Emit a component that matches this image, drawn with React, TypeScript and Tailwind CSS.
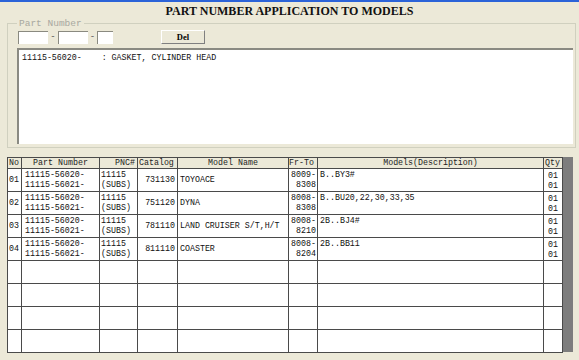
import React from "react";

const rows = [
  { no: "01", pnc: "11115", cat: "731130", model: "TOYOACE", fr: "8009-", to: "8308", desc: "B..BY3#" },
  { no: "02", pnc: "11115", cat: "751120", model: "DYNA", fr: "8008-", to: "8308", desc: "B..BU20,22,30,33,35" },
  { no: "03", pnc: "11115", cat: "781110", model: "LAND CRUISER S/T,H/T", fr: "8008-", to: "8210", desc: "2B..BJ4#" },
  { no: "04", pnc: "11115", cat: "811110", model: "COASTER", fr: "8008-", to: "8204", desc: "2B..BB11" },
];

const cell = "border border-[#4a4a4a] bg-white p-0";
const hcell = "border border-[#4a4a4a] bg-[#ECE9D8] p-0 font-normal text-[#222]";

export default function App() {
  return (
    <div
      className="w-[579px] h-[360px] bg-[#ECE9D8] overflow-hidden flex flex-col text-black"
      style={{ fontFamily: '"Liberation Mono", monospace' }}
    >
      <div className="h-[2px] bg-[#2B63D8]" />
      <div
        className="h-[21px] flex items-start pt-[2px] justify-center font-bold text-[12px] leading-[14px] text-[#111]"
        style={{ fontFamily: '"Liberation Serif", serif' }}
      >
        PART NUMBER APPLICATION TO MODELS
      </div>
      <div className="relative ml-[7px] w-[569px] h-[125px] border border-[#D0D0BF] flex flex-col">
        <div className="absolute -top-[6px] left-[9px] px-[2px] bg-[#ECE9D8] text-[9.5px] leading-[12px] text-[#A8A8A0]">
          Part Number
        </div>
        <div className="flex items-center mt-[6px] ml-[10px] h-[14px]">
          <div className="w-[30px] h-[13px] bg-white border-t border-l border-[#8a8a80]" />
          <div className="w-[10px] text-center text-[9px] leading-[13px] text-[#555]">-</div>
          <div className="w-[30px] h-[13px] bg-white border-t border-l border-[#8a8a80]" />
          <div className="w-[9px] text-center text-[9px] leading-[13px] text-[#555]">-</div>
          <div className="w-[16px] h-[13px] bg-white border-t border-l border-[#8a8a80]" />
          <div
            className="ml-[48px] w-[44px] h-[14px] flex items-center justify-center text-[8.5px] font-bold bg-[#ECE9D8] border-t border-l border-white border-r border-b border-r-[#808080] border-b-[#808080]"
            style={{ fontFamily: '"Liberation Serif", serif' }}
          >
            Del
          </div>
        </div>
        <div className="ml-[9px] mt-[4px] w-[556px] h-[96px] bg-white border-t-2 border-l-2 border-t-[#8a8a82] border-l-[#8a8a82] px-[3px] pt-[3px] text-[8.3px] leading-[10px] whitespace-pre text-[#111]">
          {"11115-56020-    : GASKET, CYLINDER HEAD"}
        </div>
      </div>
      <div className="mt-[9px] ml-[7px] flex">
        <table className="border-collapse table-fixed w-[555px] text-[8.3px] leading-[10px] text-[#111]">
          <colgroup>
            <col className="w-[14px]" />
            <col className="w-[78px]" />
            <col className="w-[38px]" />
            <col className="w-[40px]" />
            <col className="w-[111px]" />
            <col className="w-[29px]" />
            <col className="w-[226px]" />
            <col className="w-[19px]" />
          </colgroup>
          <thead>
            <tr className="h-[11px]">
              <th className={hcell + " text-left pl-[1px]"}>No</th>
              <th className={hcell + " text-center"}>Part Number</th>
              <th className={hcell + " text-right pr-[2px]"}>PNC#</th>
              <th className={hcell + " text-left pl-[1px]"}>Catalog</th>
              <th className={hcell + " text-center"}>Model Name</th>
              <th className={hcell + " text-left"}>Fr-To</th>
              <th className={hcell + " text-center"}>Models(Description)</th>
              <th className={hcell + " text-left pl-[1px]"}>Qty</th>
            </tr>
          </thead>
          <tbody>
            {rows.map((r) => (
              <tr key={r.no} className="h-[23px]">
                <td className={cell + " align-middle pl-[1px]"}>{r.no}</td>
                <td className={cell + " align-top pl-[3px] pt-[1px]"}>
                  <div>11115-56020-</div>
                  <div>11115-56021-</div>
                </td>
                <td className={cell + " align-top pl-[1px] pt-[1px]"}>
                  <div>{r.pnc}</div>
                  <div>(SUBS)</div>
                </td>
                <td className={cell + " align-middle text-right pr-[2px]"}>{r.cat}</td>
                <td className={cell + " align-middle pl-[2px] whitespace-nowrap overflow-hidden"}>{r.model}</td>
                <td className={cell + " align-top text-right pr-[1px] pt-[1px]"}>
                  <div>{r.fr}</div>
                  <div>{r.to}</div>
                </td>
                <td className={cell + " align-top pl-[2px] pt-[1px]"}>{r.desc}</td>
                <td className={cell + " align-top text-center pt-[2px]"}>
                  <div>01</div>
                  <div>01</div>
                </td>
              </tr>
            ))}
            {[0, 1, 2, 3].map((i) => (
              <tr key={"e" + i} className="h-[23px]">
                {[0, 1, 2, 3, 4, 5, 6, 7].map((j) => (
                  <td key={j} className={cell} />
                ))}
              </tr>
            ))}
          </tbody>
        </table>
        <div className="w-[10px] h-[195px] bg-[#7d7d7d]" />
      </div>
    </div>
  );
}
